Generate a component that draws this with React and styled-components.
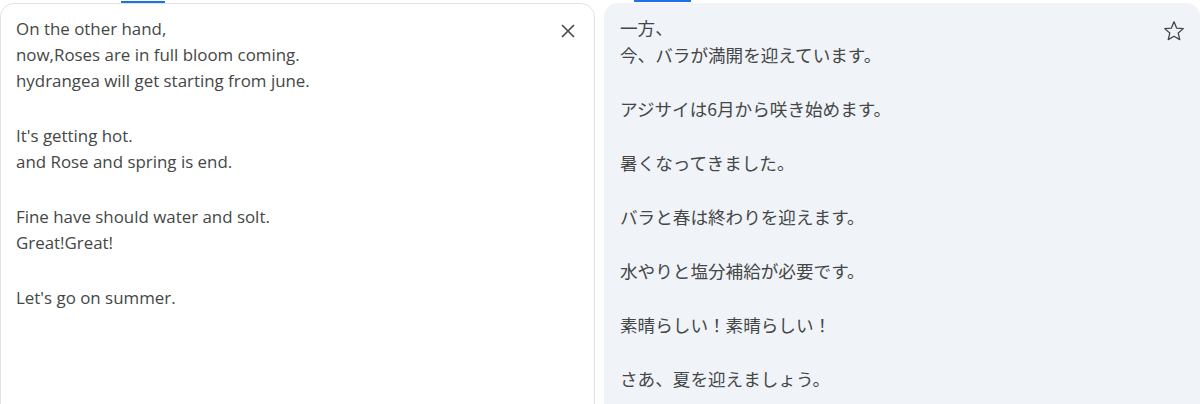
import React from 'react'
import styled, { createGlobalStyle } from 'styled-components'

const GlobalStyle = createGlobalStyle`
    html, body {
        margin: 0;
        padding: 0;
        background: #ffffff;
        overflow: hidden;
    }
`

const Page = styled.div`
    width: 1200px;
    height: 404px;
    display: flex;
    gap: 9px;
    padding-top: 3px;
    box-sizing: border-box;
    overflow: hidden;
`

const Panel = styled.div`
    position: relative;
    display: flex;
    align-items: flex-start;
    flex: ${props => props.grow ? 1 : 'none'};
    width: ${props => props.grow ? 'auto' : '595px'};
    height: 440px;
    box-sizing: border-box;
    border-radius: 14px;
    background: ${props => props.tinted ? '#f0f3f8' : '#ffffff'};
    border: ${props => props.tinted ? 'none' : '1px solid #e3e3e3'};
    padding: ${props => props.tinted ? '11px 12px 0 16px' : '12px 14px 0 15px'};
`

const TabMark = styled.div`
    position: absolute;
    top: -3px;
    left: ${props => props.left}px;
    width: ${props => props.width}px;
    height: 2px;
    background: #1a73e8;
`

const SourceText = styled.div`
    flex: 1;
    font-family: "Open Sans", "Liberation Sans", sans-serif;
    font-size: 16.9px;
    color: #444746;
`

const Line = styled.div`
    line-height: 26px;
    height: 26px;
    white-space: pre;
    margin-top: ${props => props.gap ? '29px' : '0'};
`

const TargetText = styled.div`
    flex: 1;
    font-family: "Noto Sans CJK JP", sans-serif;
    font-size: 17.6px;
    color: #444746;
`

const JaLine = styled.div`
    line-height: 27px;
    height: 27px;
    white-space: pre;
    margin-top: ${props => props.gap ? '27px' : '0'};
`

const IconButton = styled.button`
    flex: none;
    margin-top: ${props => props.offset}px;
    width: ${props => props.size}px;
    height: ${props => props.size}px;
    padding: 0;
    border: none;
    background: transparent;
    display: flex;
    align-items: center;
    justify-content: center;
    color: #444746;
    cursor: pointer;
`

const source = [
    ['On the other hand,', false],
    ['now,Roses are in full bloom coming.', false],
    ['hydrangea will get starting from june.', false],
    ["It's getting hot.", true],
    ['and Rose and spring is end.', false],
    ['Fine have should water and solt.', true],
    ['Great!Great!', false],
    ["Let's go on summer.", true],
]

const target = [
    ['一方、', false],
    ['今、バラが満開を迎えています。', false],
    ['アジサイは6月から咲き始めます。', true],
    ['暑くなってきました。', true],
    ['バラと春は終わりを迎えます。', true],
    ['水やりと塩分補給が必要です。', true],
    ['素晴らしい！素晴らしい！', true],
    ['さあ、夏を迎えましょう。', true],
]

const App = () => {
    return (
        <Page>
            <GlobalStyle />
            <Panel>
                <TabMark left={120} width={44} />
                <SourceText>
                    {source.map(([text, gap], i) => (
                        <Line key={i} gap={gap}>{text}</Line>
                    ))}
                </SourceText>
                <IconButton size={24} offset={3} aria-label="Clear">
                    <svg width="14" height="14" viewBox="0 0 14 14">
                        <path d="M1 1 L13 13 M13 1 L1 13" stroke="#444746" strokeWidth="1.6" fill="none" />
                    </svg>
                </IconButton>
            </Panel>
            <Panel tinted grow>
                <TabMark left={30} width={57} />
                <TargetText>
                    {target.map(([text, gap], i) => (
                        <JaLine key={i} gap={gap}>{text}</JaLine>
                    ))}
                </TargetText>
                <IconButton size={28} offset={3} aria-label="Save">
                    <svg width="26" height="26" viewBox="0 0 24 24">
                        <path d="M12 3.5 L14.4 9.3 L20.6 9.8 L15.9 13.9 L17.3 20 L12 16.8 L6.7 20 L8.1 13.9 L3.4 9.8 L9.6 9.3 Z" stroke="#444746" strokeWidth="1.2" fill="none" strokeLinejoin="round" />
                    </svg>
                </IconButton>
            </Panel>
        </Page>
    )
}

export default App
